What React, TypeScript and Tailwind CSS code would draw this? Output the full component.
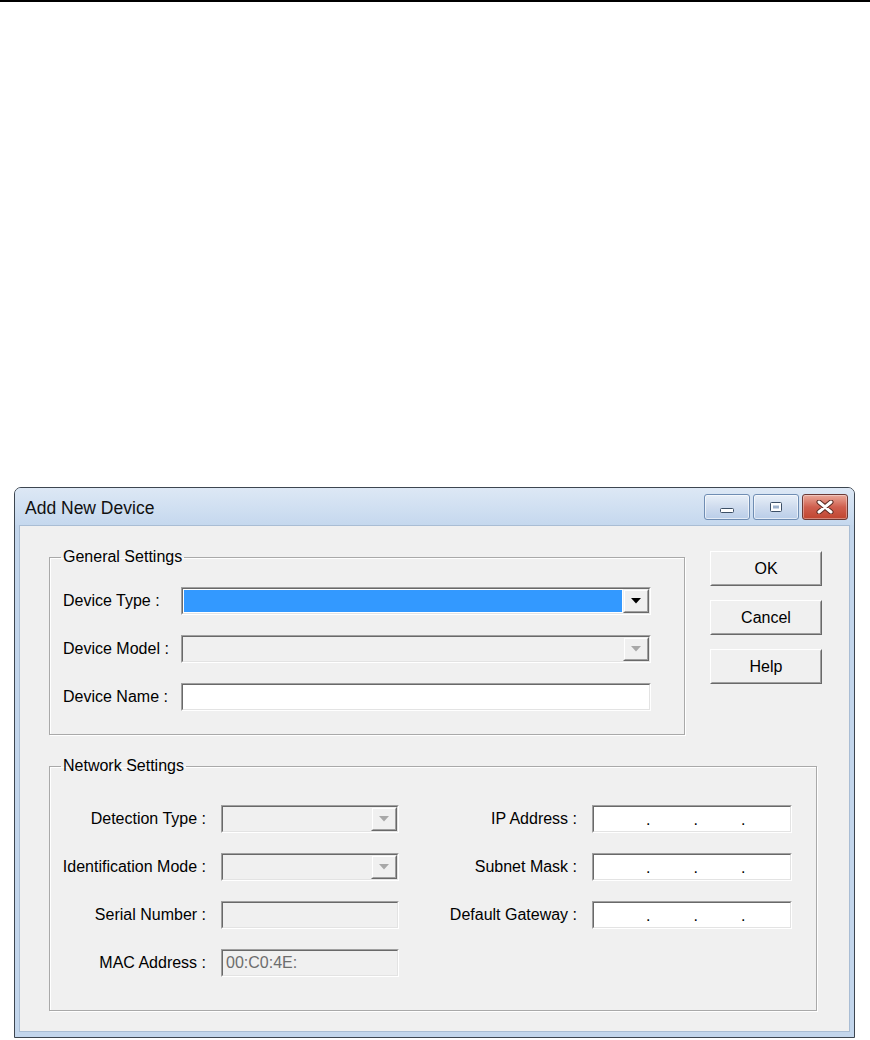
import React from "react";

function Sunken({
  className = "",
  innerClass = "",
  children,
}: {
  className?: string;
  innerClass?: string;
  children?: React.ReactNode;
}) {
  return (
    <div
      className={
        "border border-t-[#a0a0a0] border-l-[#a0a0a0] border-b-[#ffffff] border-r-[#ffffff] " +
        className
      }
    >
      <div
        className={
          "h-full border border-t-[#696969] border-l-[#696969] border-b-[#e3e3e3] border-r-[#e3e3e3] " +
          innerClass
        }
      >
        {children}
      </div>
    </div>
  );
}

function DropButton({ disabled }: { disabled?: boolean }) {
  return (
    <div className="h-full w-[26px] border border-t-[#f0f0f0] border-l-[#f0f0f0] border-b-[#696969] border-r-[#696969]">
      <div className="flex h-full items-center justify-center border border-t-white border-l-white border-b-[#a0a0a0] border-r-[#a0a0a0] bg-[#f0f0f0]">
        <svg width="10" height="6" viewBox="0 0 10 6">
          <polygon points="0,0 10,0 5,5.5" fill={disabled ? "#a8a8a8" : "#000000"} />
        </svg>
      </div>
    </div>
  );
}

function Combo({ selected, disabled }: { selected?: boolean; disabled?: boolean }) {
  return (
    <Sunken
      className="h-[28px] w-full"
      innerClass={"flex " + (disabled ? "bg-[#f0f0f0]" : "bg-white")}
    >
      <div className="h-full flex-1 p-[1px]">
        {selected ? <div className="h-full bg-[#3399ff]" /> : null}
      </div>
      <DropButton disabled={disabled} />
    </Sunken>
  );
}

function TextBox({ disabled, children }: { disabled?: boolean; children?: React.ReactNode }) {
  return (
    <Sunken
      className="h-[28px] w-full"
      innerClass={"flex items-center " + (disabled ? "bg-[#f0f0f0]" : "bg-white")}
    >
      {children}
    </Sunken>
  );
}

function IpBox() {
  return (
    <TextBox>
      <div className="flex items-center pt-[2px] text-[16px] leading-none text-black">
        <div className="w-[52px]" />
        <span>.</span>
        <div className="w-[43px]" />
        <span>.</span>
        <div className="w-[43px]" />
        <span>.</span>
      </div>
    </TextBox>
  );
}

function PushButton({ label }: { label: string }) {
  return (
    <div className="h-[35px] w-[112px] border border-t-white border-l-white border-b-[#696969] border-r-[#696969]">
      <div className="flex h-full items-center justify-center border border-t-[#f0f0f0] border-l-[#f0f0f0] border-b-[#a0a0a0] border-r-[#a0a0a0] bg-[#f0f0f0] text-[16px] text-black">
        {label}
      </div>
    </div>
  );
}

function CaptionButton({ kind }: { kind: "min" | "max" | "close" }) {
  if (kind === "close") {
    return (
      <div className="flex h-[26px] w-[46px] items-center justify-center rounded-[3px] border border-[#6b3a36] bg-gradient-to-b from-[#e9a99b] via-[#cf5f4f] to-[#c0452f] shadow-[inset_0_0_0_1px_rgba(255,255,255,0.35)]">
        <svg width="18" height="14" viewBox="0 0 18 14">
          <path d="M3 2 L15 12 M15 2 L3 12" stroke="#5a2a22" strokeWidth="5" strokeLinecap="round" />
          <path d="M3 2 L15 12 M15 2 L3 12" stroke="#ffffff" strokeWidth="3" strokeLinecap="round" />
        </svg>
      </div>
    );
  }
  return (
    <div className="flex h-[26px] w-[46px] items-center justify-center rounded-[3px] border border-[#6f8db3] bg-gradient-to-b from-[#e8eff8] via-[#cfdcee] to-[#b9cde8] shadow-[inset_0_0_0_1px_rgba(255,255,255,0.6)]">
      {kind === "min" ? (
        <svg width="18" height="14" viewBox="0 0 18 14">
          <rect x="2.5" y="8.5" width="13" height="4" rx="1" fill="#ffffff" stroke="#3c4f66" />
        </svg>
      ) : (
        <svg width="18" height="14" viewBox="0 0 18 14">
          <rect x="3.5" y="2.5" width="11" height="9" rx="1" fill="#ffffff" stroke="#3c4f66" />
          <rect x="6" y="5.5" width="6" height="3" fill="#9eb2cc" />
        </svg>
      )}
    </div>
  );
}

export default function App() {
  return (
    <div className="h-[1040px] w-[870px] overflow-hidden bg-white font-['Liberation_Sans',Arial,sans-serif] text-black">
      <div className="h-[2px] w-full bg-black" />
      <div className="ml-[14px] mt-[485px] w-[841px] rounded-t-[7px] border border-[#3d4650] bg-[#c3d6ec] px-[4px] pb-[5px] shadow-[inset_0_1px_0_rgba(255,255,255,0.7)]">
        {/* Title bar */}
        <div className="-mx-[4px] flex h-[37px] items-start justify-between rounded-t-[6px] bg-gradient-to-b from-[#dde8f5] to-[#c5d8ee] px-[4px]">
          <div className="ml-[6px] mt-[9px] text-[17.5px] leading-[22px] text-[#111]">Add New Device</div>
          <div className="mr-[2px] mt-[6px] flex gap-[3px]">
            <CaptionButton kind="min" />
            <CaptionButton kind="max" />
            <CaptionButton kind="close" />
          </div>
        </div>
        {/* Content */}
        <div className="h-[507px] border border-[#a9bdd4] bg-[#f0f0f0] text-[16px]">
          <div className="flex items-start">
            <fieldset className="ml-[29px] mt-[22px] w-[636px] border border-[#a9a9a9] shadow-[1px_1px_0_#ffffff,inset_1px_1px_0_#ffffff]">
              <legend className="ml-[11px] px-[2px] leading-[18px]">General Settings</legend>
              <div className="grid grid-cols-[118px_470px] gap-y-[20px] pb-[23px] pl-[13px] pt-[21px]">
                <div className="flex h-[28px] items-center">Device Type :</div>
                <Combo selected />
                <div className="flex h-[28px] items-center">Device Model :</div>
                <Combo disabled />
                <div className="flex h-[28px] items-center">Device Name :</div>
                <TextBox />
              </div>
            </fieldset>
            <div className="ml-[25px] mt-[25px] flex flex-col gap-[14px]">
              <PushButton label="OK" />
              <PushButton label="Cancel" />
              <PushButton label="Help" />
            </div>
          </div>

          <fieldset className="ml-[29px] mt-[22px] w-[768px] border border-[#a9a9a9] shadow-[1px_1px_0_#ffffff,inset_1px_1px_0_#ffffff]">
            <legend className="ml-[11px] px-[2px] leading-[18px]">Network Settings</legend>
            <div className="grid grid-cols-[156px_178px_163px_200px] grid-rows-[28px_28px_28px_28px] gap-x-[15px] gap-y-[20px] pb-[33px] pt-[30px]">
              <div className="flex items-center justify-end">Detection Type :</div>
              <Combo disabled />
              <div className="flex items-center justify-end">IP Address :</div>
              <IpBox />

              <div className="flex items-center justify-end">Identification Mode :</div>
              <Combo disabled />
              <div className="flex items-center justify-end">Subnet Mask :</div>
              <IpBox />

              <div className="flex items-center justify-end">Serial Number :</div>
              <TextBox disabled />
              <div className="flex items-center justify-end">Default Gateway :</div>
              <IpBox />

              <div className="flex items-center justify-end">MAC Address :</div>
              <TextBox disabled>
                <span className="pl-[3px] text-[#6d6d6d]">00:C0:4E:</span>
              </TextBox>
              <div />
              <div />
            </div>
          </fieldset>
        </div>
      </div>
    </div>
  );
}
